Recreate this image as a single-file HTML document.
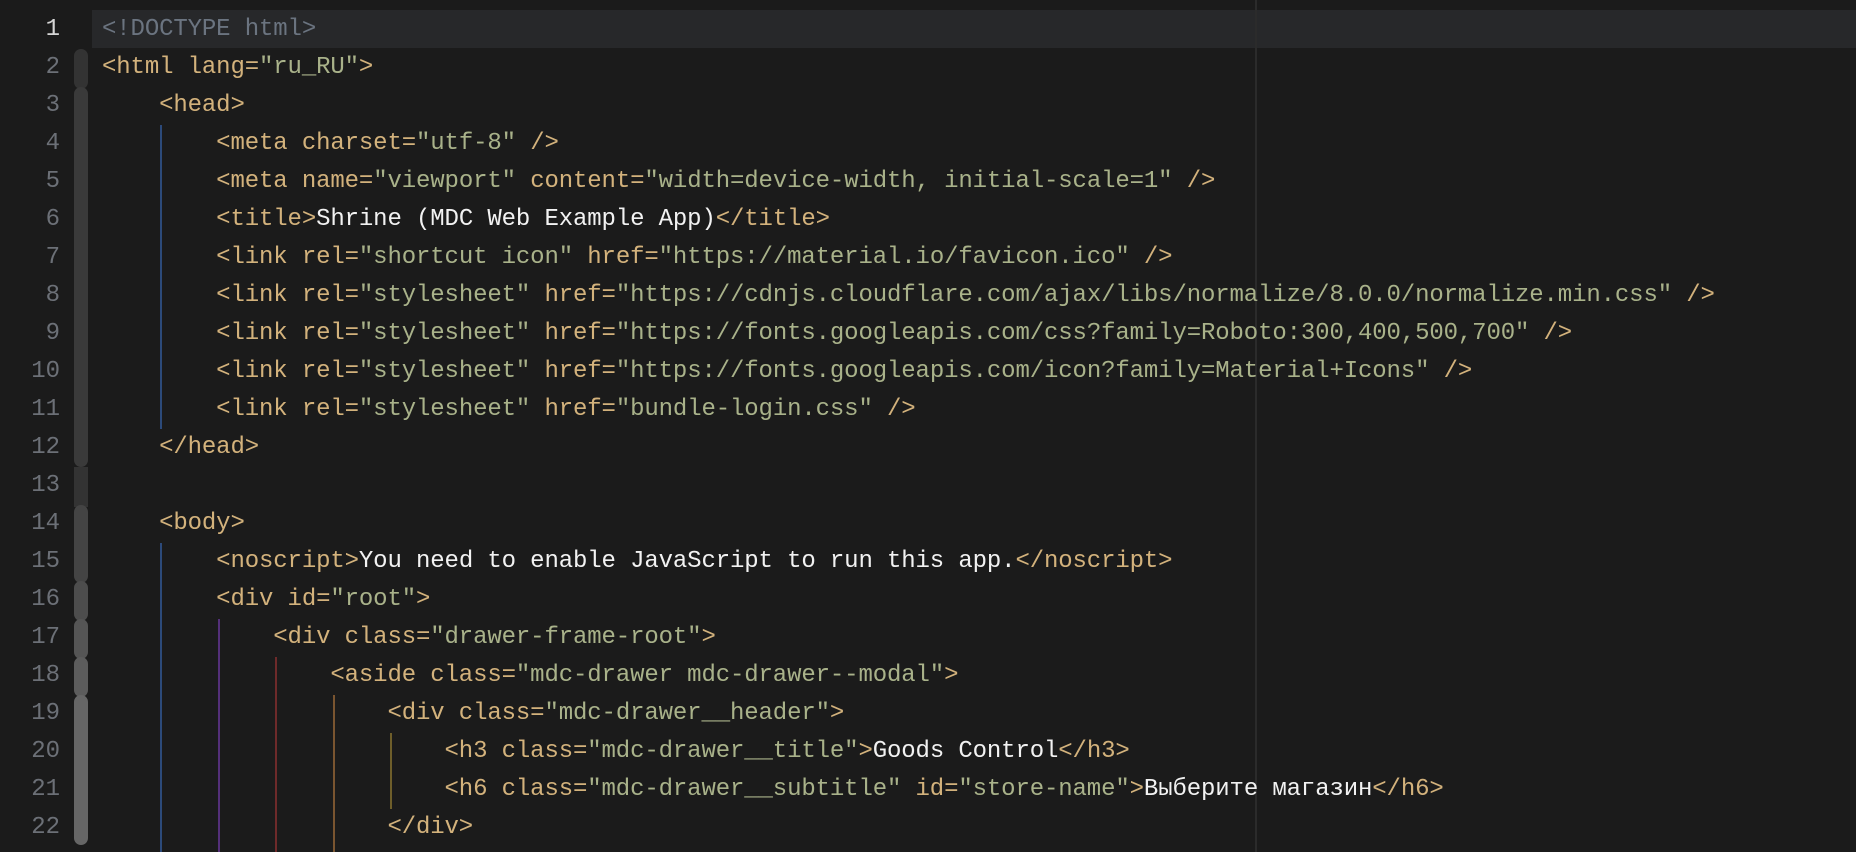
<!DOCTYPE html>
<html><head><meta charset="utf-8"><style>
body{margin:0;width:1856px;height:852px;background:#1b1b1b;overflow:hidden;position:relative;font-family:"Liberation Mono","DejaVu Sans Mono",monospace;font-size:24px}
.hl{position:absolute;left:92px;top:10px;width:1764px;height:38px;background:#27282a}
.ruler{position:absolute;left:1255px;top:0;width:2px;height:852px;background:#2b2b2b}
.ln{position:absolute;left:0;width:60px;text-align:right;color:#6c7077;line-height:38px;height:38px}
.row{position:absolute;left:102px;white-space:pre;line-height:38px;height:38px;color:#d3b27c;letter-spacing:-0.13px}
.v{color:#a9b28a}.w{color:#f2f2f2}.d{color:#6b7480}
.g{position:absolute;width:2px}
.b{position:absolute;left:74px;width:14px;border-radius:7px}
</style></head><body>
<div class="hl"></div>
<div class="ruler"></div>
<div class="b" style="top:49px;height:40px;background:#333"></div>
<div class="b" style="top:87px;height:380px;background:#3a3a3a"></div>
<div class="b" style="top:467px;height:40px;background:#333;border-radius:0"></div>
<div class="b" style="top:505px;height:78px;background:#444"></div>
<div class="b" style="top:581px;height:40px;background:#4d4d4d"></div>
<div class="b" style="top:619px;height:40px;background:#555"></div>
<div class="b" style="top:657px;height:40px;background:#5c5c5c"></div>
<div class="b" style="top:695px;height:150px;background:#666"></div>
<div class="g" style="left:160px;top:125px;height:304px;background:#2c4a7a"></div>
<div class="g" style="left:160px;top:543px;height:309px;background:#2c4a7a"></div>
<div class="g" style="left:218px;top:619px;height:233px;background:#54307a"></div>
<div class="g" style="left:275px;top:657px;height:195px;background:#6e2a2a"></div>
<div class="g" style="left:333px;top:695px;height:157px;background:#7a5530"></div>
<div class="g" style="left:390px;top:733px;height:76px;background:#6e5e2a"></div>
<div class="ln" style="top:11px;color:#d6d6d6">1</div>
<div class="ln" style="top:49px">2</div>
<div class="ln" style="top:87px">3</div>
<div class="ln" style="top:125px">4</div>
<div class="ln" style="top:163px">5</div>
<div class="ln" style="top:201px">6</div>
<div class="ln" style="top:239px">7</div>
<div class="ln" style="top:277px">8</div>
<div class="ln" style="top:315px">9</div>
<div class="ln" style="top:353px">10</div>
<div class="ln" style="top:391px">11</div>
<div class="ln" style="top:429px">12</div>
<div class="ln" style="top:467px">13</div>
<div class="ln" style="top:505px">14</div>
<div class="ln" style="top:543px">15</div>
<div class="ln" style="top:581px">16</div>
<div class="ln" style="top:619px">17</div>
<div class="ln" style="top:657px">18</div>
<div class="ln" style="top:695px">19</div>
<div class="ln" style="top:733px">20</div>
<div class="ln" style="top:771px">21</div>
<div class="ln" style="top:809px">22</div>
<div class="row d" style="top:11px">&lt;!DOCTYPE html&gt;</div>
<div class="row" style="top:49px">&lt;html lang=<span class="v">"ru_RU"</span>&gt;</div>
<div class="row" style="top:87px">    &lt;head&gt;</div>
<div class="row" style="top:125px">        &lt;meta charset=<span class="v">"utf-8"</span> /&gt;</div>
<div class="row" style="top:163px">        &lt;meta name=<span class="v">"viewport"</span> content=<span class="v">"width=device-width, initial-scale=1"</span> /&gt;</div>
<div class="row" style="top:201px">        &lt;title&gt;<span class="w">Shrine (MDC Web Example App)</span>&lt;/title&gt;</div>
<div class="row" style="top:239px">        &lt;link rel=<span class="v">"shortcut icon"</span> href=<span class="v">"https://material.io/favicon.ico"</span> /&gt;</div>
<div class="row" style="top:277px">        &lt;link rel=<span class="v">"stylesheet"</span> href=<span class="v">"https://cdnjs.cloudflare.com/ajax/libs/normalize/8.0.0/normalize.min.css"</span> /&gt;</div>
<div class="row" style="top:315px">        &lt;link rel=<span class="v">"stylesheet"</span> href=<span class="v">"https://fonts.googleapis.com/css?family=Roboto:300,400,500,700"</span> /&gt;</div>
<div class="row" style="top:353px">        &lt;link rel=<span class="v">"stylesheet"</span> href=<span class="v">"https://fonts.googleapis.com/icon?family=Material+Icons"</span> /&gt;</div>
<div class="row" style="top:391px">        &lt;link rel=<span class="v">"stylesheet"</span> href=<span class="v">"bundle-login.css"</span> /&gt;</div>
<div class="row" style="top:429px">    &lt;/head&gt;</div>
<div class="row" style="top:505px">    &lt;body&gt;</div>
<div class="row" style="top:543px">        &lt;noscript&gt;<span class="w">You need to enable JavaScript to run this app.</span>&lt;/noscript&gt;</div>
<div class="row" style="top:581px">        &lt;div id=<span class="v">"root"</span>&gt;</div>
<div class="row" style="top:619px">            &lt;div class=<span class="v">"drawer-frame-root"</span>&gt;</div>
<div class="row" style="top:657px">                &lt;aside class=<span class="v">"mdc-drawer mdc-drawer--modal"</span>&gt;</div>
<div class="row" style="top:695px">                    &lt;div class=<span class="v">"mdc-drawer__header"</span>&gt;</div>
<div class="row" style="top:733px">                        &lt;h3 class=<span class="v">"mdc-drawer__title"</span>&gt;<span class="w">Goods Control</span>&lt;/h3&gt;</div>
<div class="row" style="top:771px">                        &lt;h6 class=<span class="v">"mdc-drawer__subtitle"</span> id=<span class="v">"store-name"</span>&gt;<span class="w">Выберите магазин</span>&lt;/h6&gt;</div>
<div class="row" style="top:809px">                    &lt;/div&gt;</div>
</body></html>
